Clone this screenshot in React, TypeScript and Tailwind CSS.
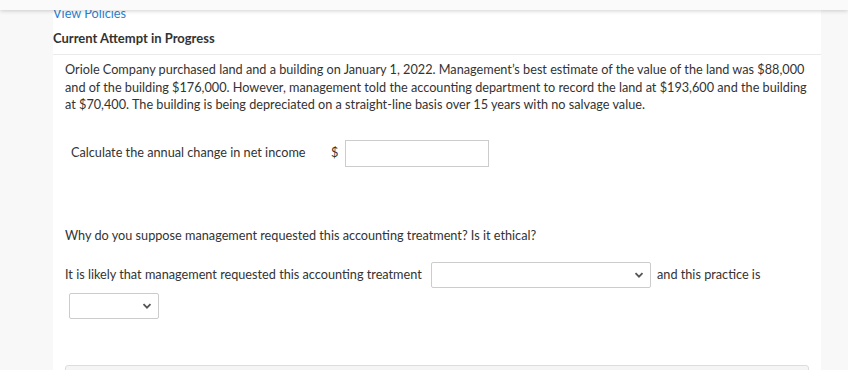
import React from "react";

function Chevron() {
  return (
    <svg width="10" height="10" viewBox="0 0 10 10" className="text-[#555]">
      <path d="M1.5 3.2 L5 6.7 L8.5 3.2" fill="none" stroke="currentColor" strokeWidth="1.8" />
    </svg>
  );
}

function Select(props: { className: string }) {
  return (
    <div
      className={
        "flex items-center justify-end rounded-[2px] border border-[#cccccc] bg-white pr-[6px] " + props.className
      }
    >
      <Chevron />
    </div>
  );
}

export default function App() {
  return (
    <div className="relative h-[370px] w-full overflow-hidden bg-[#f8f8f8] font-['Lato','Open_Sans',sans-serif] text-[12.7px] text-[#333]">
      {/* top bar lies over the scrolled content */}
      <div className="absolute left-0 right-0 top-0 z-10 h-[10px] bg-[#fafafa] shadow-[0_1px_4px_rgba(0,0,0,0.18)]" />

      <div className="ml-[53px] h-[370px] w-[768px] bg-white">
        <div className="pt-[4px] leading-[18px] text-[#2c7fd0]">View Policies</div>
        <div className="mt-[7px] text-[13px] font-bold leading-[18px] text-[#333]">Current Attempt in Progress</div>
        <div className="mt-[7px] border-t border-[#eaeaea]" />

        <div className="pl-[12px] pr-[13px] pt-[6px]">
          <p className="leading-[17.5px]">
            Oriole Company purchased land and a building on January 1, 2022. Management’s best estimate of the value
            of the land was $88,000 and of the building $176,000. However, management told the accounting department
            to record the land at $193,600 and the building at $70,400. The building is being depreciated on a
            straight-line basis over 15 years with no salvage value.
          </p>

          <div className="mt-[26px] flex items-center pl-[6px]">
            <span className="w-[260px]">Calculate the annual change in net income</span>
            <span className="w-[14px]">$</span>
            <div className="h-[27px] w-[144px] border border-[#cccccc] bg-white" />
          </div>

          <p className="mt-[59px] leading-[18px]">Why do you suppose management requested this accounting treatment? Is it ethical?</p>

          <div className="mt-[18px] flex items-center">
            <span className="w-[366px]">It is likely that management requested this accounting treatment</span>
            <Select className="h-[26px] w-[220px]" />
            <span className="ml-[6px]">and this practice is</span>
          </div>
          <Select className="ml-[4px] mt-[5px] h-[26px] w-[90px]" />

          <div className="mt-[46px] h-[40px] w-[744px] rounded-[3px] border border-[#dddddd] bg-[#f5f5f5]" />
        </div>
      </div>
    </div>
  );
}
